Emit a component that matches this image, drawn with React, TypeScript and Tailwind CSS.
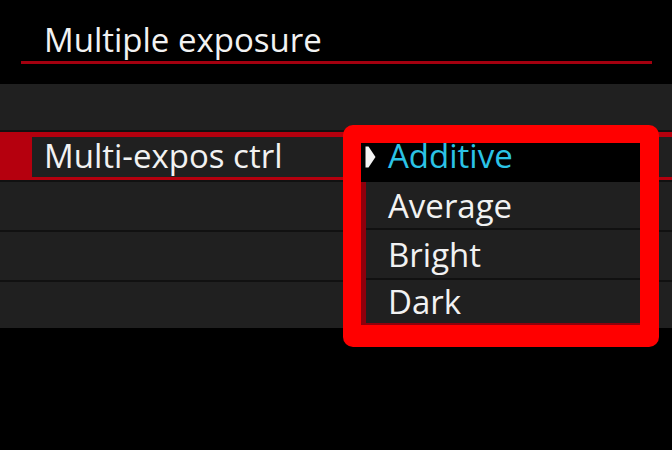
import React from "react";

const font = { fontFamily: '"Open Sans", "Noto Sans", "Liberation Sans", sans-serif' };

export default function App() {
  return (
    <div className="relative w-[672px] h-[450px] bg-black overflow-hidden text-white" style={font}>
      {/* Header */}
      <div className="h-[84px] pt-[23px]">
        <div className="pl-[44px] text-[33px] leading-[33px] text-[#f2f2f2]">Multiple exposure</div>
        <div className="ml-[21px] mr-[20px] mt-[5px] h-[3px] bg-[#a3000f]" />
      </div>

      {/* Rows */}
      <div className="flex flex-col gap-[2px] bg-[#111111]">
        <div className="h-[46px] bg-[#202020]" />
        <div className="h-[48px] bg-[#b5000e] pt-[5px] pb-[3px] pl-[32px]">
          <div className="h-[40px] bg-[#202020] pl-[12px] pt-[2px]">
            <div className="text-[33px] leading-[33px] text-[#f2f2f2]">Multi-expos ctrl</div>
          </div>
        </div>
        <div className="h-[48px] bg-[#202020]" />
        <div className="h-[48px] bg-[#202020]" />
        <div className="h-[46px] bg-[#202020]" />
      </div>

      {/* Popup menu overlay */}
      <div className="absolute left-[343px] top-[125px] w-[316px] h-[222px] rounded-[10px] bg-[#ff0000] pl-[18px] pt-[18px] pr-[19px] pb-[22px]">
        <div className="flex flex-col h-full bg-[#8f000c]">
          <div className="h-[39px] bg-black flex items-start relative">
            <svg className="absolute left-[4px] top-[3px]" width="11" height="22" viewBox="0 0 11 22">
              <path d="M0.5 0.5 L3.5 0.5 L10.5 11 L3.5 21.5 L0.5 21.5 Z" fill="#f4f4f4" />
            </svg>
            <div className="pl-[27px] text-[33px] leading-[26px] text-[#2bc3e6]">Additive</div>
          </div>
          <div className="ml-[5px] mb-[2px] flex-1 flex flex-col gap-[2px] bg-[#111111]">
            <div className="h-[46px] bg-[#202020] flex items-center pl-[22px] pt-[1px]">
              <span className="text-[33px] leading-[33px] text-[#f2f2f2]">Average</span>
            </div>
            <div className="h-[48px] bg-[#202020] flex items-center pl-[22px]">
              <span className="text-[33px] leading-[33px] text-[#f2f2f2]">Bright</span>
            </div>
            <div className="flex-1 bg-[#202020] flex items-center pl-[22px]">
              <span className="text-[33px] leading-[33px] text-[#f2f2f2]">Dark</span>
            </div>
          </div>
        </div>
      </div>
    </div>
  );
}
